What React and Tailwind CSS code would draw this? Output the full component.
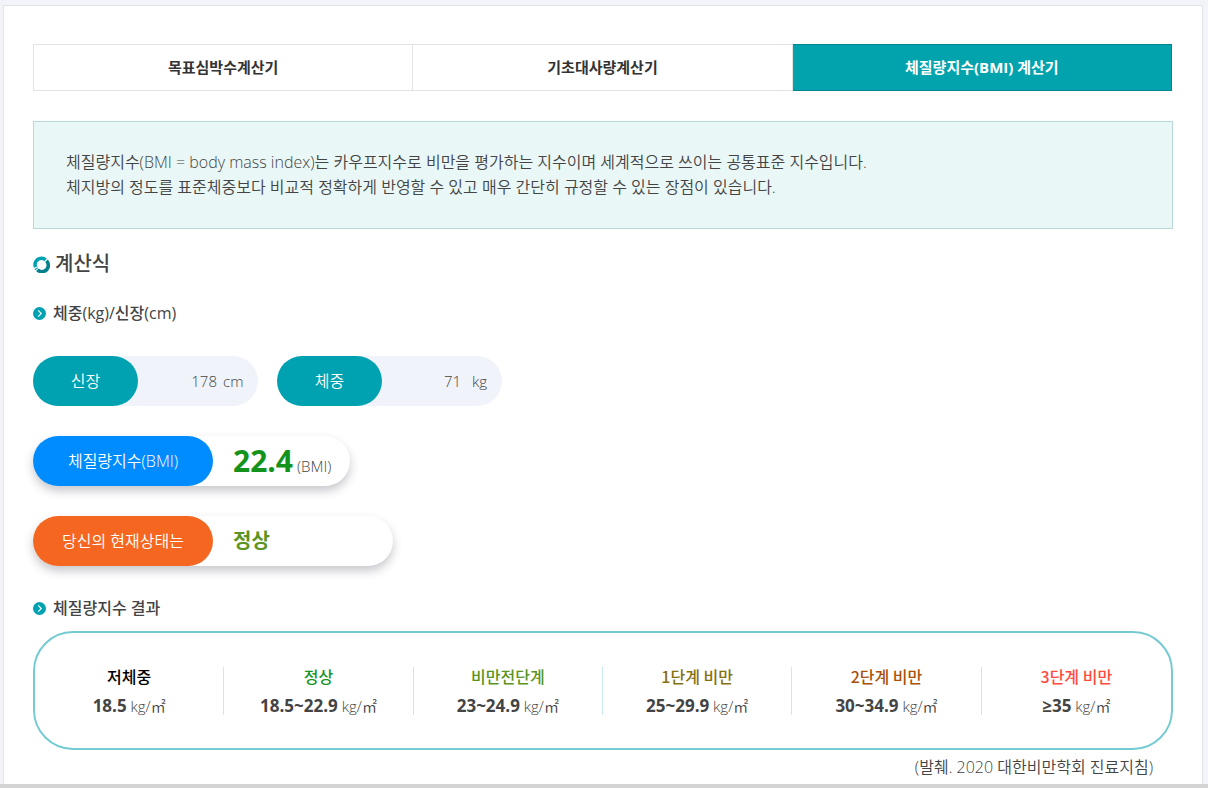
import React, { useState } from "react";
import clsx from "clsx";

const tabs = [
  { id: "heart", label: "목표심박수계산기" },
  { id: "bmr", label: "기초대사량계산기" },
  { id: "bmi", label: "체질량지수(BMI) 계산기" },
];

const grades = [
  { name: "저체중", range: "18.5", color: "text-black" },
  { name: "정상", range: "18.5~22.9", color: "text-[#17931f]" },
  { name: "비만전단계", range: "23~24.9", color: "text-[#5b9420]" },
  { name: "1단계 비만", range: "25~29.9", color: "text-[#857112]" },
  { name: "2단계 비만", range: "30~34.9", color: "text-[#a8520c]" },
  { name: "3단계 비만", range: "≥35", color: "text-[#ff4b3e]" },
];

function RingIcon() {
  return (
    <svg className="size-[17px] shrink-0" viewBox="0 0 17 17" fill="none" strokeWidth="3.6" aria-hidden="true">
      <path d="M2.6 11.1A6.3 6.3 0 0 1 12.6 3.9" stroke="#00a2b1" />
      <path d="M13.5 4.8A6.3 6.3 0 0 1 4.4 13.8" stroke="#04808c" />
      <path d="M3.7 13.1A6.3 6.3 0 0 1 3.1 12.2" stroke="#00a2b1" />
    </svg>
  );
}

function ArrowIcon() {
  return (
    <svg className="size-[13px] shrink-0" viewBox="0 0 13 13" fill="none" aria-hidden="true">
      <circle cx="6.5" cy="6.5" r="6.5" fill="#00a2b1" />
      <path d="M5.2 3.4 8.3 6.5 5.2 9.6" stroke="#fff" strokeWidth="1.1" />
    </svg>
  );
}

function SubTitle({ children }) {
  return (
    <h3 className="flex items-center gap-[7px] text-base leading-6 font-medium">
      <ArrowIcon />
      {children}
    </h3>
  );
}

function Field({ id, label, unit, value, onChange }) {
  return (
    <div className="flex h-[50px] w-[225px] items-center rounded-full bg-[#f0f3f9] pr-[15px]">
      <label
        htmlFor={id}
        className="flex h-full w-[105px] shrink-0 items-center justify-center rounded-full bg-[#00a2b1] text-base text-white"
      >
        {label}
      </label>
      <input
        id={id}
        value={value}
        onChange={(e) => onChange(e.target.value)}
        className="min-w-0 flex-1 bg-transparent text-right outline-none"
      />
      <span className="ml-[6px] w-5 text-right">{unit}</span>
    </div>
  );
}

export default function App() {
  const [active, setActive] = useState("bmi");
  const [height, setHeight] = useState("178");
  const [weight, setWeight] = useState("71");

  const bmi = (Number(weight) / (Number(height) / 100) ** 2).toFixed(1);

  return (
    <div className="bg-[#f2f4f9] pt-[5px] font-['Open_Sans','Noto_Sans_CJK_KR',sans-serif] text-[15px] font-[350] text-[#444]">
      <main className="mr-[5px] ml-[3px] border border-b-0 border-[#e1e3e5] bg-white px-[29px] pt-[38px] pb-1">
        {/* Tabs */}
        <nav className="mr-px grid grid-cols-3 border-l border-[#e1e3e5]">
          {tabs.map((tab) => (
            <a
              key={tab.id}
              href={"#" + tab.id}
              onClick={() => setActive(tab.id)}
              className={clsx(
                "flex h-[47px] items-center justify-center border border-l-0 font-bold",
                active === tab.id
                  ? "border-[#018792] bg-[#03a3ae] text-white"
                  : "border-[#e1e3e5] text-[#333]"
              )}
            >
              {tab.label}
            </a>
          ))}
        </nav>

        {/* Description */}
        <p className="mt-[30px] border border-[#b9d8d8] bg-[#eaf7f7] px-8 py-7 text-base leading-[25px]">
          체질량지수(BMI = body mass index)는 카우프지수로 비만을 평가하는 지수이며 세계적으로 쓰이는 공통표준 지수입니다.
          <br />
          체지방의 정도를 표준체중보다 비교적 정확하게 반영할 수 있고 매우 간단히 규정할 수 있는 장점이 있습니다.
        </p>

        <h2 className="mt-5 mb-[22px] flex items-center gap-[5px] text-xl leading-[30px] font-medium">
          <RingIcon />
          계산식
        </h2>
        <SubTitle>체중(kg)/신장(cm)</SubTitle>

        {/* Inputs */}
        <div className="mt-[31px] flex flex-wrap gap-[19px]">
          <Field id="height" label="신장" unit="cm" value={height} onChange={setHeight} />
          <Field id="weight" label="체중" unit="kg" value={weight} onChange={setWeight} />
        </div>

        {/* Result */}
        <div className="mt-[30px] flex h-[50px] w-[317px] items-center rounded-full shadow-[0_5px_10px_rgba(40,40,60,0.25)]">
          <span className="flex h-full w-[180px] items-center justify-center rounded-full bg-[#008bff] text-base text-white">
            체질량지수(BMI)
          </span>
          <p className="ml-5 flex items-baseline gap-1">
            <strong className="text-[30px] leading-9 font-bold text-[#13931b]">{bmi}</strong>
            <span>(BMI)</span>
          </p>
        </div>
        <div className="mt-[30px] flex h-[50px] w-[360px] items-center rounded-full shadow-[0_5px_10px_rgba(40,40,60,0.25)]">
          <span className="flex h-full w-[180px] items-center justify-center rounded-full bg-[#f56720] text-base text-white">
            당신의 현재상태는
          </span>
          <strong className="ml-5 text-xl font-bold text-[#5b9420]">정상</strong>
        </div>

        <div className="mt-[30px] mb-[11px]">
          <SubTitle>체질량지수 결과</SubTitle>
        </div>

        <ul className="grid grid-cols-6 divide-x divide-[#cbeaec] rounded-[40px] border-2 border-[#75cbd3] pt-[34px] pb-[33px] text-center">
          {grades.map((grade) => (
            <li key={grade.name} className="flex h-12 flex-col items-center justify-center">
              <strong
                className={clsx("font-['Noto_Sans_CJK_KR',sans-serif] text-base leading-[30px] font-medium", grade.color)}
              >
                {grade.name}
              </strong>
              <span className="leading-[30px]">
                <b className="text-[17px] font-bold">{grade.range}</b> kg/㎡
              </span>
            </li>
          ))}
        </ul>

        <p className="mr-5 mt-1 text-right text-base leading-[26px]">(발췌. 2020 대한비만학회 진료지침)</p>
      </main>
      <div className="h-1 bg-[#d4d4d4]" />
    </div>
  );
}
